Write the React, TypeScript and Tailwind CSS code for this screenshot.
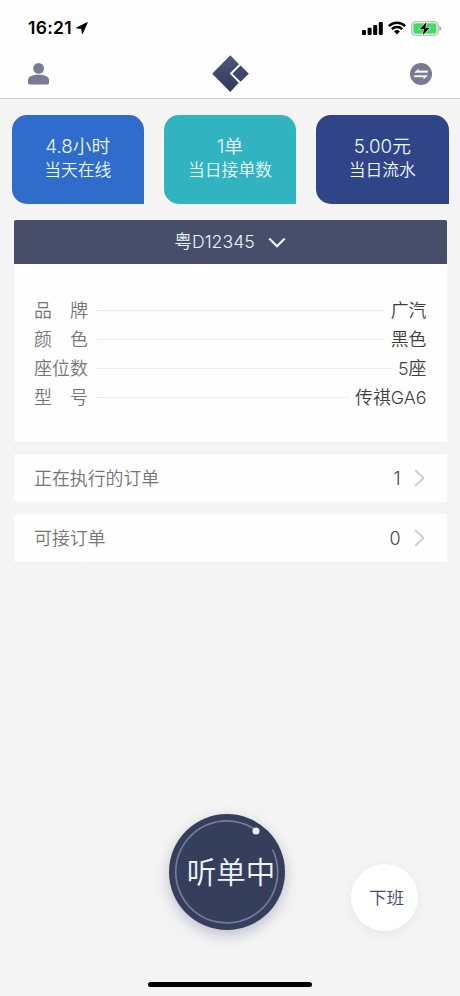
import React from 'react';

const stats = [
  { value: '4.8小时', label: '当天在线', color: 'bg-[#2f6ccb]' },
  { value: '1单', label: '当日接单数', color: 'bg-[#32b3c0]' },
  { value: '5.00元', label: '当日流水', color: 'bg-[#304488]' },
];

const details = [
  { label: ['品', '牌'], value: '广汽' },
  { label: ['颜', '色'], value: '黑色' },
  { label: ['座', '位', '数'], value: '5座' },
  { label: ['型', '号'], value: '传祺GA6' },
];

function StatusBar() {
  return (
    <div className="flex h-[49px] items-start justify-between pl-7 pr-[19px] pt-[18px]">
      <div className="flex h-5 items-center">
        <span className="w-[45px] whitespace-nowrap text-[17.500px] font-semibold leading-5 tracking-[0.300px] text-black">16:21</span>
        <svg className="ml-[3px]" width="12" height="12" viewBox="0 0 12 12">
          <path d="M11.300.6.500 5.900l5.200.6.700 5.100Z" fill="#000" stroke="#000" strokeWidth=".9" strokeLinejoin="round" />
        </svg>
      </div>
      <div className="flex h-5 items-center">
        <svg width="21" height="13" viewBox="0 0 21 13">
          <rect x="0" y="8" width="4" height="5" rx="1" />
          <rect x="5.600" y="5.800" width="4" height="7.200" rx="1" />
          <rect x="11.200" y="3" width="4" height="10" rx="1" />
          <rect x="16.800" y="0" width="4" height="13" rx="1" />
        </svg>
        <svg className="ml-[5px]" width="18" height="14" viewBox="0 0 18 14">
          <path d="M.9 5.100a11.600 11.600 0 0 1 16.200 0M3.800 8.200a7.400 7.400 0 0 1 10.400 0" fill="none" stroke="#000" strokeWidth="2.400" />
          <path d="M6.100 10.400a4.200 4.200 0 0 1 5.800 0L9 13.500Z" />
        </svg>
        <svg className="-mr-px ml-[5px]" width="31" height="15" viewBox="0 0 31 15">
          <rect x=".7" y=".7" width="26.400" height="13.600" rx="4" fill="#fff" stroke="#aaa" strokeWidth="1.100" />
          <rect x="2.300" y="2.300" width="23.200" height="10.400" rx="2.300" fill="#45da63" />
          <path d="M28.400 5v5c1.100-.4 1.800-1.300 1.800-2.500S29.500 5.400 28.400 5Z" fill="#999" />
          <path d="M15.300 1.200 8.600 8.300h4.400l-1.100 5.700 6.900-7.300h-4.400Z" fill="#000" stroke="#d9f9df" strokeWidth="1.100" paintOrder="stroke" />
        </svg>
      </div>
    </div>
  );
}

function Header() {
  return (
    <header className="flex h-[50px] items-center justify-between border-b border-[#cdcdcf] pl-7 pr-7">
      <svg width="22" height="22" viewBox="0 0 22 22" fill="#797b94">
        <circle cx="10.600" cy="5.400" r="5.400" />
        <path d="M0 16.900C0 13.300 4.600 11.700 10.500 11.700S21 13.300 21 16.900v3.100c0 .8-.6 1.400-1.400 1.400H1.400C.6 21.400 0 20.800 0 20Z" />
      </svg>
      <svg width="38" height="38" viewBox="0 0 38 38">
        <defs>
          <linearGradient id="logo" x1="0" x2="0" y1="0" y2="1">
            <stop stopColor="#4d587b" />
            <stop offset="1" stopColor="#30385a" />
          </linearGradient>
        </defs>
        <path d="M19.300.3 28 9.300l-9.300 9.200 9 9.200-8.400 9.300L1.200 18.700Z" fill="url(#logo)" />
        <path d="m29.600 10.600 8.200 8.100-8.200 8.100-8.300-8.100Z" fill="#3e486c" />
      </svg>
      <svg className="-mr-4" width="38" height="22" viewBox="0 0 38 22">
        <circle cx="11" cy="11" r="11" fill="#797b94" />
        <path d="M17.800 9.500H4.500l4-3.600v1.900h9.300ZM4.200 12.400h13.500l-4 3.600v-1.900H4.200Z" fill="#fff" stroke="#fff" strokeWidth=".3" />
      </svg>
    </header>
  );
}

function OrderRow({ label, count }: { label: string; count: number }) {
  return (
    <div className="flex h-12 items-center rounded-[2px] bg-[#fefefe] pl-[20.500px] pr-[22px]">
      <span className="pt-[3px] text-[17.900px] text-[#757575]">{label}</span>
      <span className="ml-auto mr-[13px] pt-px text-[18px] text-[#444]">{count}</span>
      <svg width="11" height="18" viewBox="0 0 11 18">
        <path d="m1.200 1.200 8.300 7.800-8.300 7.800" fill="none" stroke="#c8c8c8" strokeWidth="1.700" />
      </svg>
    </div>
  );
}

export default function App() {
  return (
    <div className="flex h-[996px] w-[460px] flex-col bg-[#f4f4f4] font-['Inter','Noto_Sans_CJK_SC',sans-serif] font-[350]">
      <div className="bg-[#fefefe]">
        <StatusBar />
        <Header />
      </div>

      <section className="flex justify-between px-[11.500px] pt-4">
        {stats.map((s) => (
          <div key={s.label} className={`flex h-[88.500px] w-[132.500px] flex-col items-center rounded-[15px] rounded-br-none pt-5 text-[#edf8ff] ${s.color}`}>
            <div className="text-[18.700px] leading-6">{s.value}</div>
            <div className="text-[16.800px] leading-[22px]">{s.label}</div>
          </div>
        ))}
      </section>

      <main className="mt-[16px] flex flex-col px-[13.500px]">
        <div className="flex h-[44.500px] items-center justify-center rounded-t-[2px] bg-[#464e69] pt-0.5 text-[17.700px] text-[#edf3ff]">
          <span>粤D12345</span>
          <svg className="ml-[13px]" width="18" height="12" viewBox="0 0 18 12">
            <path d="m1.200 1.500 7.800 7.800 7.800-7.800" fill="none" stroke="#edf3ff" strokeWidth="2.200" />
          </svg>
        </div>
        <div className="h-[177.500px] rounded-b-[2px] bg-[#fefefe] pl-[20.500px] pr-5 pt-[32px]">
          {details.map((d) => (
            <div key={d.value} className="flex h-[29px] items-center text-[17.900px]">
              <div className="flex w-[54px] justify-between pt-px text-[#757575]">
                {d.label.map((c) => (
                  <span key={c}>{c}</span>
                ))}
              </div>
              <div className="ml-2 mr-[7px] flex-1 border-t border-dotted border-[#dedede]" />
              <span className="pt-px text-[#3f3f3f]">{d.value}</span>
            </div>
          ))}
        </div>
        <div className="mt-3 flex flex-col gap-3">
          <OrderRow label="正在执行的订单" count={1} />
          <OrderRow label="可接订单" count={0} />
        </div>
      </main>

      <footer className="mt-auto flex h-[182px] flex-col">
        <div className="flex pl-[169px]">
          <button className="grid h-[116px] w-[116px] place-items-center rounded-full bg-[#353e5b] shadow-[0_5px_14px_rgba(65,70,120,0.300)]">
            <svg className="col-start-1 row-start-1" width="116" height="116" viewBox="0 0 116 116">
              <path d="M103.500 35.500A51 51 0 1 1 86 15.500" fill="none" stroke="#737c9d" strokeWidth="1.700" />
              <circle cx="87" cy="17" r="3.500" fill="#f0f6ff" />
            </svg>
            <span className="col-start-1 row-start-1 ml-2 pt-0.5 text-[29.500px] leading-none text-[#f0f6ff]">听单中</span>
          </button>
          <button className="ml-[66px] mt-[50px] h-[67px] w-[67px] rounded-full bg-white pl-1 pt-0.5 text-[17.500px] text-[#44476a] shadow-[0_3px_12px_rgba(0,0,0,0.060)]">下班</button>
        </div>
        <div className="mb-[9px] ml-[148px] mt-auto h-[5.500px] w-[164px] rounded-full bg-black" />
      </footer>
    </div>
  );
}
